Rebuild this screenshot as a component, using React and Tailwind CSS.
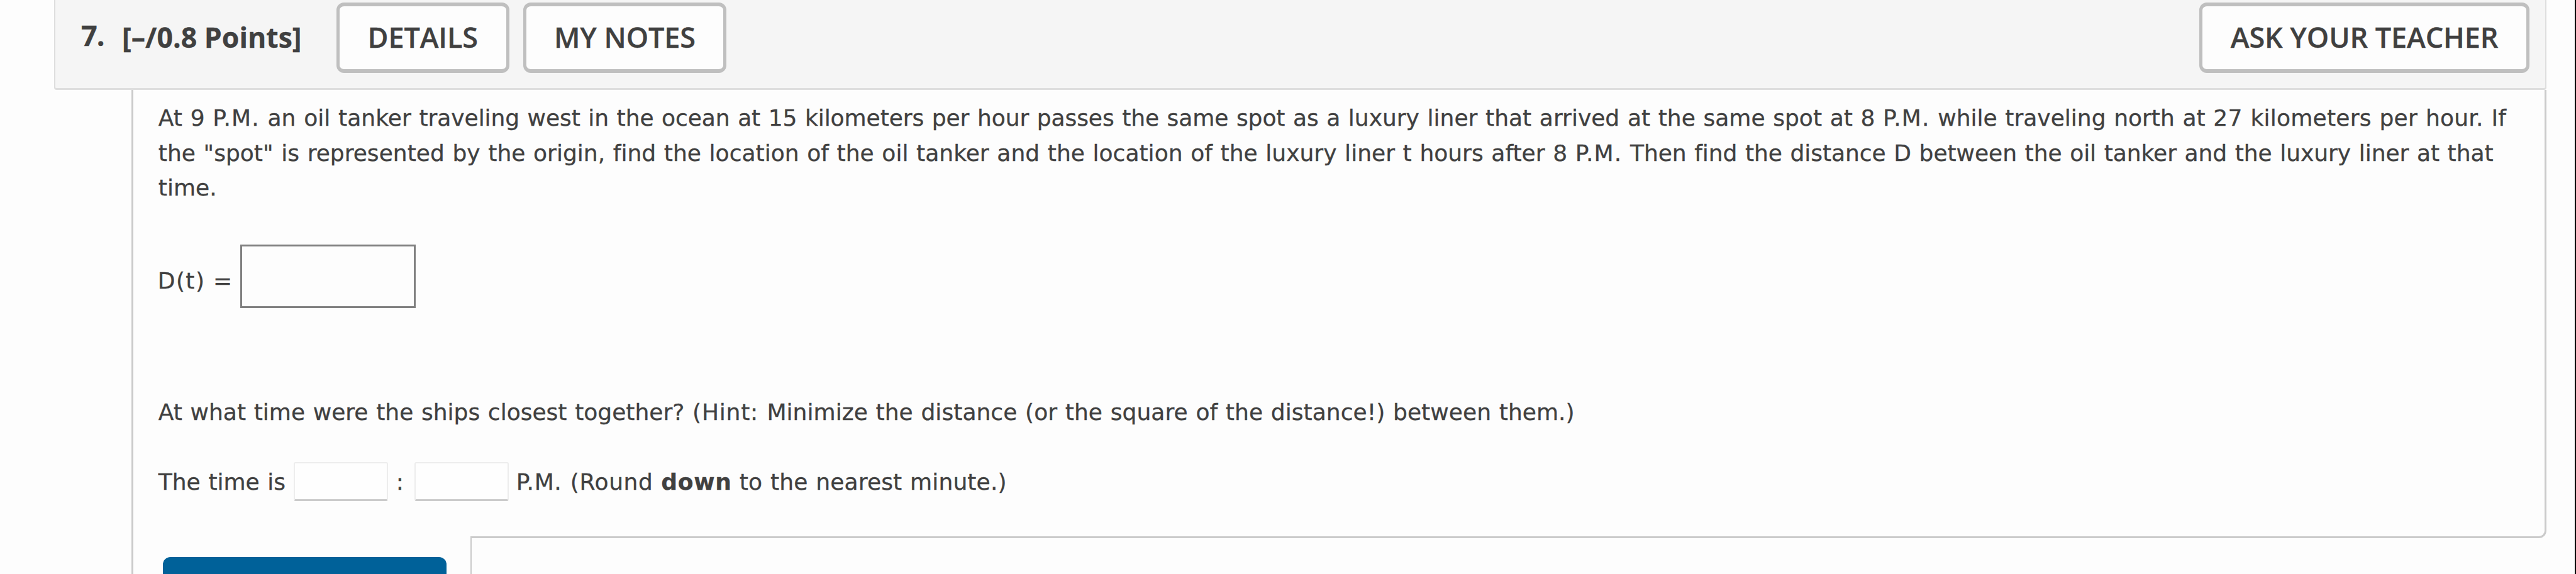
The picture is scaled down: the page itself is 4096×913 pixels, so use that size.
function HeaderButton({ children }) {
  return (
    <button className="h-[111.5px] shrink-0 whitespace-nowrap rounded-[12px] border-x-[5px] border-y-[6px] border-[#bfbfbf] bg-[#fdfdfd] px-[44.5px] text-[45px] font-semibold leading-[98px] tracking-[-0.1px]">
      <span className="block h-[99.5px]">{children}</span>
    </button>
  );
}

function TimeInput() {
  return (
    <input className="h-[62px] w-[150px] shrink-0 rounded-[3px] border-x-2 border-t-2 border-b-[3px] border-[#ededed] border-b-[#cbcbcb] bg-[#fefefe]" />
  );
}

function PM() {
  return <span className="tracking-[1.1px]">P.M.</span>;
}

export default function App() {
  return (
    <div className="flex h-[913px] w-[4096px] flex-col overflow-hidden border-r-2 border-black bg-[#fdfdfd] pl-[86px] text-[#404040] [-webkit-text-stroke:0.3px_#404040]">
      <header className="flex h-[143px] w-[3963px] shrink-0 items-start rounded-b-[4px] border-x-2 border-b-[3px] border-[#dedede] bg-[#f5f5f5] pt-1 pr-[25px] pl-[41px] font-['Open_Sans',sans-serif]">
        <div className="mt-[-3px] w-[65px] shrink-0 text-[45px] font-bold leading-[110px] tracking-[-1px]">7.</div>
        <div className="w-[341px] shrink-0 whitespace-nowrap text-[44.6px] font-bold leading-[110px]">[–/0.8 Points]</div>
        <div className="flex grow gap-[22px]">
          <HeaderButton>DETAILS</HeaderButton>
          <HeaderButton>MY NOTES</HeaderButton>
        </div>
        <HeaderButton>ASK YOUR TEACHER</HeaderButton>
      </header>

      <main className="ml-[123px] flex w-[3840px] grow flex-col border-l-[3px] border-[#cbcbcb] font-['DejaVu_Sans',Verdana,sans-serif] text-[36px] leading-[55.7px] [word-spacing:1.2px]">
        <section className="h-[713px] shrink-0 rounded-br-[12px] border-r-[3px] border-b-[3px] border-[#cbcbcb] pt-[16.8px] pl-[39.8px] whitespace-nowrap">
          <p>
            <span className="block tracking-[0.01px]">
              <span className="tracking-[0.05px]">At 9 <PM /> an oil tanker </span>
              <span className="tracking-[-0.07px]">traveling west in the ocean at 15 kilometers per hour passes the same spot as a </span>
              luxury liner that arrived at the same spot at 8 <PM /> while traveling north at{" "}
              <span className="tracking-[0.23px]">27 kilometers per hour. If</span>
            </span>
            <span className="block tracking-[0.014px]">
              the "spot" is represented by the origin, find the location of the oil tanker and the location of the luxury liner t hours after 8 <PM />{" "}
              <span className="tracking-[-0.04px]">Then find the distance D between the oil tanker and the luxury liner at that</span>
            </span>
            <span className="block">time.</span>
          </p>

          <div className="mt-[62.5px] ml-[-1px] flex h-[100.5px]">
            <div className="w-[131px] shrink-0 pt-[29.5px]">
              <span className="tracking-[1.4px]">D(t)</span> =
            </div>
            <input className="h-[101px] w-[279px] border-[3px] border-[#808080] bg-[#fdfdfd]" />
          </div>

          <p className="mt-[138px]">
            <span className="tracking-[0.01px]">At what time were the ships closest together? </span>
            <span className="tracking-[0.8px]">(Hint: </span>
            <span className="tracking-[0.05px]">Minimize the distance (or the square of the distance!) between them.)</span>
          </p>

          <div className="mt-[51.5px] flex h-[62px]">
            <span className="w-[215px] shrink-0 pt-[4px]">The time is</span>
            <TimeInput />
            <span className="w-[42px] shrink-0 pt-[4px] pl-[13px]">:</span>
            <TimeInput />
            <span className="ml-[12px] w-[230.5px] shrink-0 pt-[4px] tracking-[0.65px]">P.M. (Round</span>
            <b className="w-[124.5px] shrink-0 pt-[4px] tracking-[0.7px]">down</b>
            <span className="pt-[4px] tracking-[0.14px]">to the nearest minute.)</span>
          </div>
        </section>

        <div className="mt-[-3px] flex h-[60px] shrink-0">
          <div className="w-[536px] shrink-0 bg-[#fdfdfd] pt-[33px] pl-[47px]">
            <button className="block h-[60px] w-[451px] rounded-[12px] bg-[#006199]" />
          </div>
          <div className="grow border-l-2 border-[#cbcbcb]" />
        </div>
      </main>
    </div>
  );
}
